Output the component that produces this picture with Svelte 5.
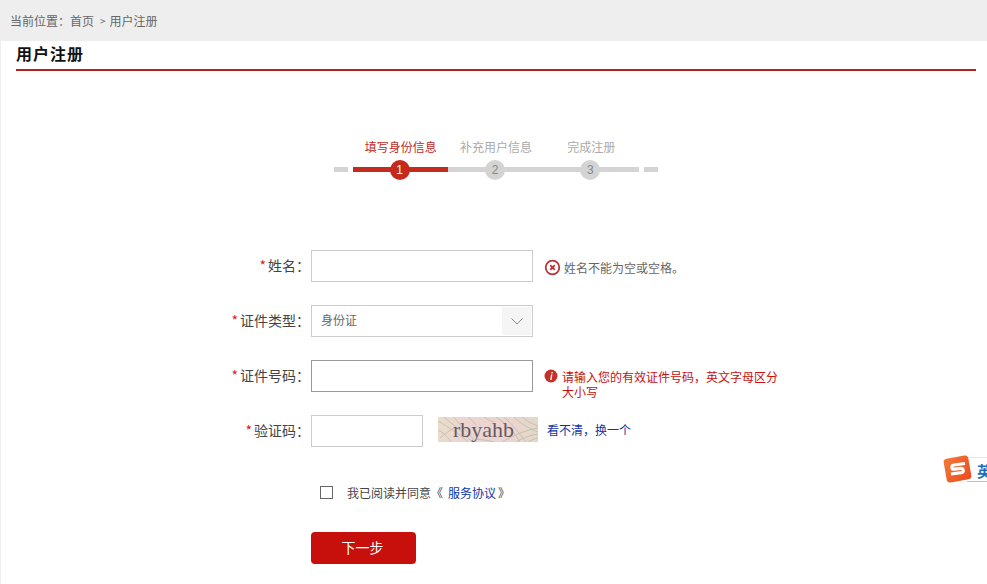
<script>
  const steps = [
    { no: 1, label: '填写身份信息', active: true },
    { no: 2, label: '补充用户信息', active: false },
    { no: 3, label: '完成注册', active: false }
  ];
</script>

<div class="page">
  <div class="crumbs">
    <span>当前位置：首页</span>
    <span class="sep">&gt;</span>
    <span>用户注册</span>
  </div>

  <div class="content">
    <h2 class="title">用户注册</h2>

    <div class="steps">
      <div class="stub"></div>
      {#each steps as step}
        <div class="step" class:active={step.active}>
          <div class="step-label">{step.label}</div>
          <div class="step-bar"><span class="step-no">{step.no}</span></div>
        </div>
      {/each}
      <div class="stub"></div>
    </div>

    <form class="form">
      <div class="row">
        <label class="label"><em>*</em>姓名：</label>
        <input class="field" type="text" />
        <div class="hint">
          <svg width="17" height="17" viewBox="0 0 17 17">
            <circle cx="8.5" cy="8.5" r="6.8" fill="none" stroke="#b9333a" stroke-width="1.8" />
            <path d="M6.2 6.2l4.6 4.6M10.8 6.2l-4.6 4.6" stroke="#b9333a" stroke-width="1.8" />
          </svg>
          <span>姓名不能为空或空格。</span>
        </div>
      </div>

      <div class="row">
        <label class="label"><em>*</em>证件类型：</label>
        <div class="field select">
          <span class="select-value">身份证</span>
          <div class="arrow">
            <svg width="12" height="7" viewBox="0 0 12 7">
              <path d="M.5.5L6 6 11.5.5" fill="none" stroke="#888" />
            </svg>
          </div>
        </div>
      </div>

      <div class="row">
        <label class="label"><em>*</em>证件号码：</label>
        <input class="field focus" type="text" />
        <div class="hint error">
          <svg width="14" height="14" viewBox="0 0 14 14">
            <circle cx="7" cy="7" r="6.5" fill="#c4302b" />
            <path d="M7.6 3h1.3l-.3 1.5H7.3zM7 5.6h1.4L7.6 11H6.2z" fill="#fff" />
          </svg>
          <span>请输入您的有效证件号码，英文字母区分大小写</span>
        </div>
      </div>

      <div class="row">
        <label class="label"><em>*</em>验证码：</label>
        <input class="field short" type="text" />
        <div class="captcha">
          <svg width="100" height="25" viewBox="0 0 100 25">
            <g fill="none" stroke="#b9b8a0" stroke-width=".7">
              <path d="M0 4c10 6 20 12 30 21M6 0c9 8 18 14 28 25M16 0c6 9 14 15 22 25M2 21c6-5 10-8 16-11M0 13c5 2 9 6 13 12" />
              <path d="M58 0c10 6 20 18 24 25M66 0c8 7 16 17 22 25M76 0c6 6 14 11 24 15M84 0c5 4 10 7 16 9M64 25c10-6 24-12 36-14M78 25c7-4 14-7 22-8M90 25c3-2 6-3 10-4" />
              <path d="M30 0c3 2 6 5 8 8M46 0c3 2 6 4 10 5M38 22c6 1 12 1 18 3" />
            </g>
          </svg>
          <span>rbyahb</span>
        </div>
        <div class="refresh">看不清，换一个</div>
      </div>

      <div class="agree">
        <span class="box"></span>
        <span class="agree-text">我已阅读并同意《</span>
        <a href="#top">服务协议</a><span class="agree-end">》</span>
      </div>

      <button class="next" type="button">下一步</button>
    </form>
  </div>

  <div class="ime">
    <svg width="30" height="30" viewBox="0 0 30 30">
      <defs>
        <linearGradient id="sogou" x1="0" y1="0" x2="1" y2="1">
          <stop offset="0" stop-color="#f47a3a" />
          <stop offset="1" stop-color="#ea4a1c" />
        </linearGradient>
      </defs>
      <rect x="2" y="3" width="25" height="24" rx="3.5" fill="url(#sogou)" transform="rotate(-10 14.5 15)" />
      <path d="M22 9.5L11 11c-3.2.5-2.6 4.6.5 4.2l6-.8c3.2-.4 3.8 3.7.6 4.2L8 20" fill="none" stroke="#fff" stroke-width="3.2" />
    </svg>
    <span class="ime-tab">英</span>
  </div>
</div>

<style>
  :global(body) {
    margin: 0;
    background: #fff;
  }

  .page {
    position: relative;
    height: 584px;
    overflow: hidden;
    font-family: "Noto Sans CJK SC", "Liberation Sans", sans-serif;
    font-size: 12px;
    color: #555;
  }

  .crumbs {
    height: 41px;
    padding-left: 10px;
    display: flex;
    align-items: center;
    gap: 6px;
    background: #eee;
    color: #666;
  }

  .sep {
    font-size: 10px;
    margin-right: -2px;
    margin-left: 0;
  }

  .content {
    height: 543px;
    padding-left: 15px;
    border-left: 1px solid #eee;
  }

  .title {
    width: 960px;
    height: 30px;
    margin: 0;
    line-height: 25px;
    font-size: 16px;
    letter-spacing: 1px;
    font-weight: bold;
    color: #111;
    border-bottom: 2px solid #b2201f;
    box-sizing: border-box;
  }

  .steps {
    display: flex;
    align-items: flex-end;
    margin: 67px 0 0 318px;
  }

  .stub {
    width: 14px;
    height: 5px;
    margin-right: 5px;
    background: #d4d4d4;
  }

  .step + .stub {
    margin: 0 0 0 5px;
  }

  .step {
    width: 95.33px;
    text-align: center;
    color: #aaa;
  }

  .step.active {
    color: #c32b1e;
  }

  .step-label {
    height: 29px;
    line-height: 17px;
    white-space: nowrap;
  }

  .step-bar {
    position: relative;
    height: 5px;
    background: #d4d4d4;
  }

  .step.active .step-bar {
    background: #c32b1e;
  }

  .step-no {
    position: absolute;
    left: 36.7px;
    top: -7.5px;
    width: 20px;
    height: 20px;
    border-radius: 50%;
    background: #d4d4d4;
    color: #888;
    line-height: 20px;
    font-family: "Liberation Sans", sans-serif;
  }

  .step.active .step-no {
    background: #c32b1e;
    color: #fff;
  }

  .form {
    margin: 78px 0 0 0;
  }

  .row {
    display: flex;
    align-items: flex-start;
    height: 32px;
    margin-bottom: 23px;
  }

  .label {
    width: 295px;
    flex: none;
    box-sizing: border-box;
    padding-right: 1px;
    text-align: right;
    line-height: 31px;
    font-size: 14px;
    color: #444;
  }

  .label em {
    font-style: normal;
    color: #d3232f;
    margin-right: 2px;
  }

  .field {
    width: 222px;
    height: 32px;
    padding: 0;
    margin: 0;
    flex: none;
    box-sizing: border-box;
    border: 1px solid #ccc;
    background: #fff;
    outline: none;
  }

  .field.focus {
    border-color: #999;
  }

  .field.short {
    width: 112px;
  }

  .select {
    display: flex;
    align-items: center;
    justify-content: space-between;
    padding-left: 9px;
    color: #666;
  }

  .select-value {
    margin-bottom: 3px;
  }

  .arrow {
    width: 29px;
    height: 28px;
    margin-right: 1px;
    display: flex;
    align-items: center;
    justify-content: center;
    background: #f5f5f5;
  }

  .hint {
    display: flex;
    align-items: center;
    gap: 3px;
    margin-left: 11px;
    height: 34px;
    color: #666;
  }

  .hint.error {
    align-items: flex-start;
    gap: 4px;
    width: 240px;
    line-height: 15px;
    color: #c80f0f;
    padding-top: 9px;
    height: auto;
  }

  .hint.error svg {
    flex: none;
  }

  .captcha {
    position: relative;
    width: 100px;
    height: 25px;
    margin: 2px 0 0 15px;
    background: linear-gradient(90deg, #e8dccc, #ecd5d0 30%, #ecd5d0 70%, #e2d8c8);
    overflow: hidden;
    flex: none;
  }

  .captcha svg {
    position: absolute;
    left: 0;
    top: 0;
  }

  .captcha span {
    position: absolute;
    left: 15px;
    top: 0;
    font-family: "Liberation Serif", serif;
    font-size: 22px;
    line-height: 25px;
    color: #665a66;
  }

  .refresh {
    margin-left: 9px;
    line-height: 30px;
    color: #11359f;
  }

  .agree {
    display: flex;
    align-items: center;
    height: 18px;
    margin: 36px 0 0 304px;
    color: #444;
  }

  .box {
    width: 11px;
    height: 11px;
    border: 1px solid #666;
    margin-right: 14px;
  }

  .agree a {
    color: #11359f;
    text-decoration: none;
    margin-left: 5px;
  }

  .agree-end {
    margin-left: 2px;
  }

  .next {
    display: block;
    width: 105px;
    height: 32px;
    margin: 31px 0 0 295px;
    padding: 0 2px 2px 0;
    border: none;
    border-radius: 4px;
    background: #c70f0c;
    color: #fff;
    font: inherit;
    font-size: 14px;
  }

  .ime {
    position: absolute;
    left: 943px;
    top: 454px;
    width: 44px;
    height: 30px;
    display: flex;
    align-items: center;
  }

  .ime svg {
    position: relative;
    z-index: 1;
    flex: none;
  }

  .ime-tab {
    margin-left: -6px;
    padding-left: 10px;
    height: 23px;
    line-height: 25px;
    font-size: 15px;
    font-weight: bold;
    color: #1a6fc0;
    border-top: 1px solid #dfe9f2;
    border-bottom: 1px solid #a9c3dc;
    white-space: nowrap;
  }
</style>
